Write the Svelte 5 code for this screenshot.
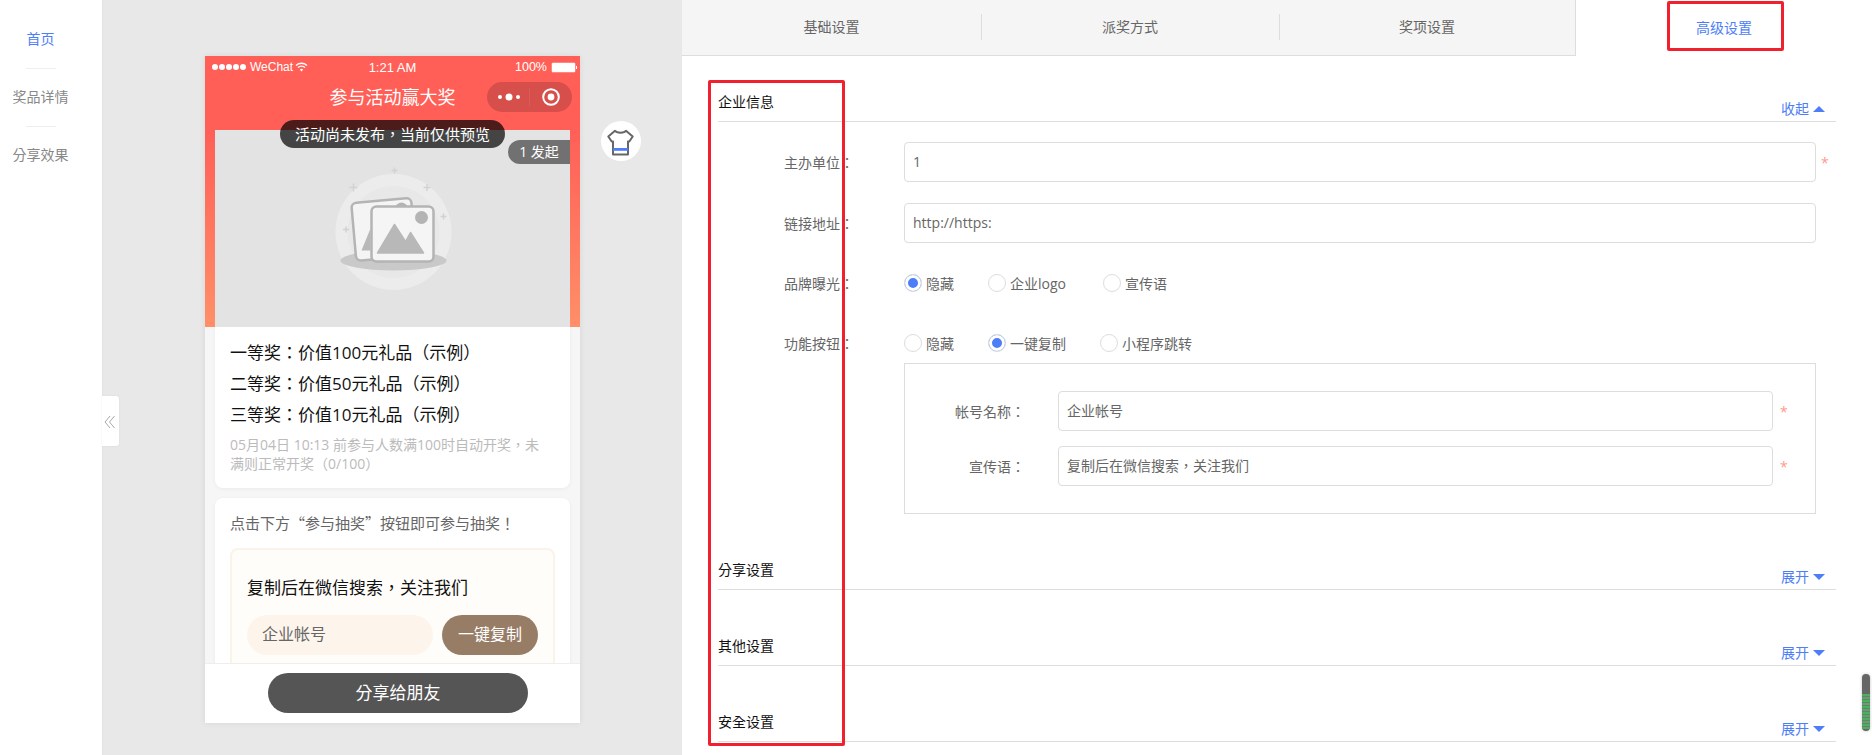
<script>
  const tabs = ['基础设置', '派奖方式', '奖项设置', '高级设置'];
  const sideItems = ['首页', '奖品详情', '分享效果'];
  const prizes = ['一等奖：价值100元礼品（示例）', '二等奖：价值50元礼品（示例）', '三等奖：价值10元礼品（示例）'];
  const collapsed = ['分享设置', '其他设置', '安全设置'];
  const brandOptions = [
    { label: '隐藏', on: true, width: 84 },
    { label: '企业logo', on: false, width: 115 },
    { label: '宣传语', on: false, width: 0 }
  ];
  const buttonOptions = [
    { label: '隐藏', on: false, width: 84 },
    { label: '一键复制', on: true, width: 112 },
    { label: '小程序跳转', on: false, width: 0 }
  ];
</script>

<div class="page">
  <aside class="side">
    {#each sideItems as item, i}
      <div class="side-item" class:active={i === 0}>{item}</div>
    {/each}
    <div class="collapse-tab">
      <svg width="17" height="50" viewBox="0 0 17 50">
        <path d="M8 20l-5 6 5 6M12.500 20l-5 6 5 6" fill="none" stroke="#aaa" stroke-width="1"/>
      </svg>
    </div>
  </aside>

  <section class="preview">
    <div class="phone">
      <div class="phone-head">
        <div class="status">
          <span class="dots"><i></i><i></i><i></i><i></i><i></i></span>
          <span class="carrier">WeChat</span>
          <svg class="wifi" width="13" height="10" viewBox="0 0 13 10">
            <path d="M1 3.4a8 8 0 0 1 11 0M3 5.5a5.2 5.2 0 0 1 7 0" fill="none" stroke="#fff" stroke-width="1.4"/>
            <path d="M4.8 7.4a2.6 2.6 0 0 1 3.4 0L6.5 9.4z" fill="#fff"/>
          </svg>
          <span class="time">1:21 AM</span>
          <span class="percent">100%</span>
          <span class="battery"></span>
        </div>
        <div class="nav">
          <span class="nav-title">参与活动赢大奖</span>
          <div class="capsule">
            <svg width="85" height="30" viewBox="0 0 85 30">
              <circle cx="13" cy="15" r="2" fill="#fff"/>
              <circle cx="22" cy="15" r="3.5" fill="#fff"/>
              <circle cx="31" cy="15" r="2" fill="#fff"/>
              <line x1="42.5" y1="6" x2="42.5" y2="24" stroke="#ffffff" stroke-opacity="0.08"/>
              <circle cx="64" cy="15" r="7.8" fill="none" stroke="#fff" stroke-width="2"/>
              <circle cx="64" cy="15" r="3.4" fill="#fff"/>
            </svg>
          </div>
        </div>
      </div>

      <div class="phone-body">
        <div class="hero">
          <div class="cover">
            <svg class="placeholder" width="160" height="150" viewBox="2.5 -1.5 160 150">
              <circle cx="83" cy="76.5" r="58" fill="#ececec"/>
              <circle cx="83" cy="76.5" r="46" fill="#e8e8e8"/>
              <ellipse cx="83" cy="105" rx="53" ry="10" fill="#c9c9c9"/>
              <g stroke="#d2d2d2" stroke-width="1.500">
                <path d="M84 12v6M81 15h6"/>
                <path d="M43 28v8M39 32h8"/>
                <path d="M116.500 28.500v7M113 32h7"/>
                <path d="M133 58v6M130 61h6"/>
                <path d="M35.500 71v6M32.500 74h6"/>
              </g>
              <g transform="rotate(-5 72 72)">
                <rect x="43" y="45" width="60" height="58" rx="5" fill="#f4f4f4" stroke="#b4b4b4" stroke-width="2.500"/>
              </g>
              <circle cx="91" cy="53" r="6" fill="#b4b4b4"/>
              <path d="M51 95l9-22v22z" fill="#b8b8b8"/>
              <rect x="61" y="51" width="62" height="55" rx="5" fill="#f5f5f5" stroke="#b4b4b4" stroke-width="2.500"/>
              <circle cx="111" cy="62" r="6.500" fill="#b4b4b4"/>
              <path d="M67 97.500L84 69l11 17 5-9 13 20.500z" fill="#b8b8b8" stroke="#b8b8b8" stroke-width="1.500" stroke-linejoin="round"/>
            </svg>
          </div>
          <div class="starter">1 发起</div>
        </div>

        <div class="card prize-card">
          {#each prizes as prize}
            <p class="prize">{prize}</p>
          {/each}
          <p class="rule">05月04日 10:13 前参与人数满100时自动开奖，未满则正常开奖（0/100）</p>
        </div>

        <div class="card join-card">
          <p class="hint">点击下方“参与抽奖”按钮即可参与抽奖！</p>
          <div class="follow">
            <p class="follow-text">复制后在微信搜索，关注我们</p>
            <div class="follow-row">
              <span class="account">企业帐号</span>
              <span class="copy">一键复制</span>
            </div>
          </div>
        </div>
      </div>

      <div class="phone-foot">
        <div class="share">分享给朋友</div>
      </div>

      <div class="toast">活动尚未发布，当前仅供预览</div>

      <div class="skin">
        <svg width="40" height="40" viewBox="0 0 40 40">
          <path d="M14 9.800c1.500 2.600 9.500 2.600 11 0l6.700 5.700-3.400 5h-1.300V33.500H12V20.500h-1.300l-3.400-5z" fill="none" stroke="#666" stroke-width="2" stroke-linejoin="round"/>
          <rect x="12" y="27" width="15" height="2.800" fill="#4d7ef7"/>
        </svg>
      </div>
    </div>
  </section>

  <main class="settings">
    <nav class="tabs">
      {#each tabs as tab, i}
        <div class="tab" class:current={i === 3} class:before={i === 2}>
          <span>{tab}</span>
        </div>
      {/each}
    </nav>

    <div class="form">
      <div class="group-head first">
        <span class="group-title">企业信息</span>
        <span class="toggle">收起<i class="arrow up"></i></span>
      </div>

      <div class="field">
        <label class="label">主办单位：</label>
        <div class="input-wrap"><div class="input">1</div></div>
        <span class="req">*</span>
      </div>
      <div class="field second">
        <label class="label">链接地址：</label>
        <div class="input-wrap"><div class="input">http://https:</div></div>
      </div>

      <div class="field radios">
        <label class="label">品牌曝光：</label>
        {#each brandOptions as opt}
          <span class="radio" style="width: {opt.width ? opt.width + 'px' : 'auto'}">
            <i class="dot" class:on={opt.on}></i>{opt.label}
          </span>
        {/each}
      </div>

      <div class="field radios fn">
        <label class="label">功能按钮：</label>
        {#each buttonOptions as opt}
          <span class="radio" style="width: {opt.width ? opt.width + 'px' : 'auto'}">
            <i class="dot" class:on={opt.on}></i>{opt.label}
          </span>
        {/each}
      </div>

      <div class="sub-box">
        <div class="sub-row">
          <label class="sub-label">帐号名称：</label>
          <div class="input">企业帐号</div>
          <span class="req">*</span>
        </div>
        <div class="sub-row">
          <label class="sub-label">宣传语：</label>
          <div class="input">复制后在微信搜索，关注我们</div>
          <span class="req">*</span>
        </div>
      </div>

      {#each collapsed as title}
        <div class="group-head">
          <span class="group-title">{title}</span>
          <span class="toggle">展开<i class="arrow down"></i></span>
        </div>
      {/each}
    </div>
  </main>

  <!-- annotation frames drawn on top of the screenshot -->
  <div class="mark mark-tab"></div>
  <div class="mark mark-labels"></div>
  <div class="meter"><div class="meter-fill"></div></div>
</div>

<style>
  :global(body) {
    margin: 0;
    background: #e8e8e8;
    font-family: "Open Sans", "Noto Sans CJK TC", sans-serif;
    font-size: 14px;
    color: #666;
    text-spacing-trim: space-all;
  }

  p {
    margin: 0;
  }

  .page {
    position: relative;
    display: flex;
    width: 1872px;
    height: 755px;
    overflow: hidden;
  }

  /* --- sidebar --- */
  .side {
    position: relative;
    box-sizing: border-box;
    flex: 0 0 103px;
    padding: 10px 21px 0 0;
    background: #fff;
    border-right: 1px solid #e2e2e2;
  }

  .side-item {
    position: relative;
    height: 58px;
    line-height: 58px;
    text-align: center;
    color: #888;
  }

  .side-item.active {
    color: #4d7ef7;
  }

  .side-item + .side-item::before {
    content: "";
    position: absolute;
    top: 0;
    left: 26px;
    width: 30px;
    height: 1px;
    background: #eee;
  }

  .collapse-tab {
    position: absolute;
    top: 396px;
    left: 102px;
    z-index: 2;
    width: 17px;
    height: 50px;
    background: #fff;
    border-radius: 0 3px 3px 0;
    box-shadow: 0 0 2px rgba(0,0,0,0.08);
  }

  .collapse-tab svg {
    display: block;
  }

  /* --- preview column --- */
  .preview {
    flex: 0 0 577px;
    padding: 56px 0 0 102px;
    box-sizing: border-box;
    background: #e8e8e8;
  }

  .phone {
    position: relative;
    display: flex;
    flex-direction: column;
    width: 375px;
    height: 667px;
    background: #f6f6f6;
    box-shadow: 0 0 6px rgba(0,0,0,0.08);
  }

  .phone-head {
    flex: none;
    height: 74px;
    background: #ff5f57;
    color: #fff;
  }

  .status {
    display: flex;
    align-items: center;
    position: relative;
    height: 22px;
    padding: 0 5px 0 7px;
    font-family: "Liberation Sans", sans-serif;
    font-size: 12px;
  }

  .dots {
    display: flex;
    gap: 1px;
    margin-right: 4px;
  }

  .dots i {
    width: 6px;
    height: 6px;
    border-radius: 50%;
    background: #fff;
  }

  .carrier {
    margin-right: 2px;
  }

  .time {
    position: absolute;
    left: 0;
    right: 0;
    text-align: center;
    font-size: 13px;
  }

  .percent {
    margin-left: auto;
    margin-right: 5px;
    font-size: 12.500px;
  }

  .battery {
    position: relative;
    box-sizing: border-box;
    width: 23px;
    height: 9px;
    background: #fff;
    border-radius: 1px;
    box-shadow: 0 0 0 0.500px #ffb0ab;
  }

  .battery::after {
    content: "";
    position: absolute;
    right: -2px;
    top: 3px;
    width: 1px;
    height: 3px;
    background: #fff;
  }

  .nav {
    position: relative;
    display: flex;
    justify-content: center;
    align-items: center;
    height: 38px;
  }

  .nav-title {
    font-size: 18px;
    line-height: 38px;
  }

  .capsule {
    position: absolute;
    top: 4px;
    right: 8px;
    width: 85px;
    height: 30px;
    background: #d64f4a;
    border-radius: 15px;
  }

  .capsule svg {
    display: block;
  }

  .phone-body {
    position: relative;
    flex: 1;
    min-height: 0;
    overflow: hidden;
  }

  .hero {
    position: relative;
    padding: 0 10px;
    height: 197px;
    background: linear-gradient(#ff5f57, #ff8f68);
  }

  .cover {
    display: flex;
    justify-content: center;
    align-items: center;
    height: 197px;
    background: #e3e3e3;
  }

  .placeholder {
    filter: blur(0.4px);
  }

  .starter {
    position: absolute;
    top: 10px;
    right: 10px;
    width: 62px;
    height: 24px;
    line-height: 23px;
    text-align: center;
    color: #fff;
    background: rgba(0,0,0,0.5);
    border-radius: 12px 0 0 12px;
  }

  .toast {
    position: absolute;
    top: 64px;
    left: 75px;
    width: 225px;
    height: 28px;
    line-height: 28px;
    text-align: center;
    font-size: 15px;
    color: #fff;
    background: rgba(0,0,0,0.7);
    border-radius: 14px;
  }

  .card {
    margin: 0 10px 10px;
    background: #fff;
    border-radius: 0 0 8px 8px;
    box-shadow: 0 1px 4px rgba(0,0,0,0.05);
  }

  .prize-card {
    box-sizing: border-box;
    height: 161px;
    padding: 10px 15px;
  }

  .prize {
    line-height: 31px;
    font-size: 17px;
    color: #111;
  }

  .rule {
    width: 320px;
    margin-top: 5px;
    line-height: 19px;
    color: #bbb;
  }

  .join-card {
    padding: 15px;
    border-radius: 8px;
    min-height: 300px;
  }

  .hint {
    line-height: 20px;
    font-size: 15px;
    font-family: "Noto Sans CJK TC", sans-serif;
  }

  .follow {
    box-sizing: border-box;
    height: 200px;
    margin-top: 15px;
    padding: 25px 15px;
    background: #fffdfa;
    border: 2px solid #f9f3ea;
    border-radius: 8px;
  }

  .follow-text {
    font-size: 17px;
    line-height: 26px;
    color: #111;
  }

  .follow-row {
    display: flex;
    justify-content: space-between;
    margin-top: 14px;
  }

  .account {
    box-sizing: border-box;
    width: 186px;
    height: 40px;
    padding-left: 15px;
    line-height: 38px;
    font-size: 16px;
    background: #fdf5ec;
    border-radius: 20px;
  }

  .copy {
    width: 96px;
    height: 40px;
    line-height: 38px;
    text-align: center;
    font-size: 16px;
    color: #fff;
    background: #987d66;
    border-radius: 20px;
  }

  .phone-foot {
    position: relative;
    flex: none;
    box-sizing: border-box;
    height: 60px;
    padding: 9px 0 0 63px;
    background: #fff;
    border-top: 1px solid #eee;
  }

  .share {
    width: 260px;
    height: 40px;
    line-height: 39px;
    text-align: center;
    font-size: 17px;
    color: #fff;
    background: #555;
    border-radius: 20px;
  }

  .skin {
    position: absolute;
    top: 65px;
    left: 396px;
    width: 40px;
    height: 40px;
    background: #fff;
    border-radius: 50%;
  }

  .skin svg {
    display: block;
  }

  /* --- settings --- */
  .settings {
    flex: 1;
    margin-left: 2px;
    background: #fff;
  }

  .tabs {
    display: flex;
    height: 56px;
  }

  .tab {
    position: relative;
    flex: 0 0 298px;
    display: flex;
    justify-content: center;
    align-items: center;
    box-sizing: border-box;
    padding-bottom: 3px;
    background: #f5f5f5;
    border-bottom: 1px solid #ddd;
  }

  .tab:first-child {
    flex-basis: 299px;
  }

  .tab + .tab::before {
    content: "";
    position: absolute;
    left: 0;
    top: 14px;
    height: 26px;
    width: 1px;
    background: #ddd;
  }

  .tab.before {
    flex-basis: 297px;
    border-right: 1px solid #ddd;
  }

  .tab.current {
    flex: 1;
    background: #fff;
    border-bottom: 0;
    color: #4d7ef7;
  }

  .tab.current::before {
    display: none;
  }

  .form {
    padding: 0 36px 0 36px;
  }

  .group-head {
    position: relative;
    box-sizing: border-box;
    height: 76px;
    border-bottom: 1px solid #ddd;
  }

  .group-head.first {
    height: 66px;
  }

  .group-title {
    position: absolute;
    left: 0;
    bottom: 9px;
    line-height: 20px;
    color: #111;
  }

  .toggle {
    position: absolute;
    right: 11px;
    bottom: 2px;
    line-height: 20px;
    color: #4d7ef7;
  }

  .arrow {
    display: inline-block;
    margin-left: 4px;
    vertical-align: 2px;
    border-left: 6px solid transparent;
    border-right: 6px solid transparent;
  }

  .arrow.up {
    border-bottom: 6px solid #4d7ef7;
  }

  .arrow.down {
    border-top: 6px solid #4d7ef7;
  }

  .field {
    position: relative;
    display: flex;
    align-items: center;
    height: 40px;
    margin-top: 20px;
    width: 1098px;
  }

  .field.second {
    margin-top: 21px;
  }

  .label {
    flex: 0 0 186px;
    box-sizing: border-box;
    padding-left: 66px;
    white-space: nowrap;
  }

  .input-wrap {
    flex: 1;
  }

  .input {
    box-sizing: border-box;
    flex: 1;
    height: 40px;
    padding: 0 8px;
    line-height: 38px;
    color: #666;
    background: #fff;
    border: 1px solid #ddd;
    border-radius: 4px;
  }

  .req {
    position: absolute;
    left: calc(100% + 5px);
    top: 11px;
    color: #ff9a8a;
    font-size: 14px;
  }

  .sub-row .req {
    left: calc(100% + 7px);
  }

  .radios {
    height: 20px;
    margin-top: 30px;
  }

  .fn {
    margin-top: 40px;
  }

  .radio {
    display: inline-flex;
    align-items: center;
    white-space: nowrap;
  }

  .dot {
    box-sizing: border-box;
    width: 18px;
    height: 18px;
    margin-right: 4px;
    background: #fff;
    border: 1px solid #ddd;
    border-radius: 50%;
  }

  .dot.on {
    background: #4d7ef7;
    box-shadow: inset 0 0 0 3px #fff;
  }

  .sub-box {
    box-sizing: border-box;
    width: 912px;
    height: 151px;
    margin: 10px 0 0 186px;
    padding: 27px 42px 0 0;
    border: 1px solid #ddd;
  }

  .sub-row {
    position: relative;
    display: flex;
    align-items: center;
    height: 40px;
    margin-bottom: 15px;
  }

  .sub-label {
    flex: 0 0 153px;
    box-sizing: border-box;
    padding-right: 33px;
    text-align: right;
    white-space: nowrap;
  }

  /* --- overlays --- */
  .mark {
    position: absolute;
    box-sizing: border-box;
    border: 3px solid #f0202f;
    border-radius: 2px;
    pointer-events: none;
  }

  .mark-tab {
    left: 1667px;
    top: 1px;
    width: 117px;
    height: 50px;
  }

  .mark-labels {
    left: 708px;
    top: 80px;
    width: 137px;
    height: 666px;
  }

  .meter {
    position: absolute;
    left: 1862px;
    top: 674px;
    width: 8px;
    height: 57px;
    background: #666;
    border-radius: 4px;
    overflow: hidden;
    box-shadow: 0 0 3px rgba(0,0,0,0.25);
  }

  .meter-fill {
    margin-top: 20px;
    height: 35px;
    background: repeating-linear-gradient(#4caf60 0 2px, #777 2px 3px);
  }
</style>
